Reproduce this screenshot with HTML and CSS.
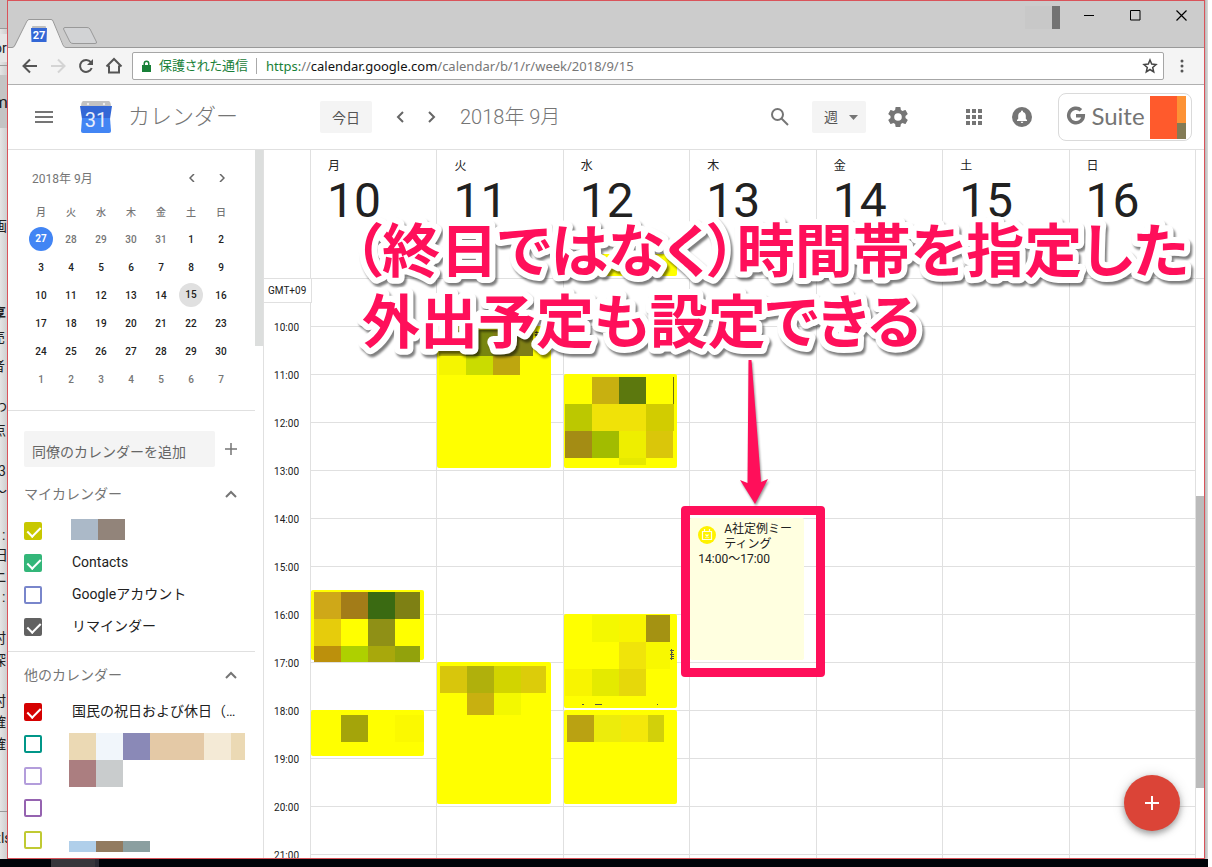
FILE: index.html
```html
<!DOCTYPE html>
<html lang="ja">
<head>
<meta charset="utf-8">
<title>カレンダー - 2018年 9月</title>
<link rel="stylesheet" href="styles.css">
</head>
<body>
<div class="desktop">
  <svg class="behind-left" aria-hidden="true">
    <rect class="behind-tabs" width="7" height="28"/>
    <rect class="behind-rule" y="28" width="7" height="1"/>
    <rect class="behind-field" y="34" width="7" height="28"/>
    <rect class="behind-rule" y="65" width="7" height="1"/>
    <rect class="behind-tabs" y="75" width="7" height="53"/>
    <text x="-6" y="53">or</text>
    <text class="big" x="-7" y="108">m</text>
    <text x="-7" y="231">画</text>
    <text class="strong" x="-8" y="318">享</text>
    <text x="-9" y="342">売</text>
    <text x="-9" y="371">者</text>
    <text x="-7" y="411">わ</text>
    <text x="-8" y="435">点</text>
    <text x="-2" y="476">3</text>
    <text x="-7" y="496">～</text>
    <text x="2" y="540">:</text>
    <text x="-6" y="560">日</text>
    <text x="-7" y="582">ニ</text>
    <text x="2" y="602">:</text>
    <text x="-8" y="643">村</text>
    <text x="-8" y="665">深</text>
    <text x="-8" y="706">村</text>
    <text x="-8" y="727">確</text>
    <text x="-8" y="749">確</text>
    <rect class="behind-rule" y="811" width="7" height="1"/>
    <text x="-6" y="843">xls</text>
  </svg>

  <div class="window">
    <div class="tabstrip">
      <svg class="tabs" width="100" height="47" viewBox="0 0 100 47" role="img" aria-label="カレンダー タブ">
        <path d="M0 46.500H5L7 45 19 19.500Q20 18.500 21 18.500H43Q44 18.500 45 20L56 45 58 46.500V47H0Z" fill="#f4f4f4"/>
        <path d="M0 46.500H4Q6 46.500 7 44L19 20Q20 18.500 21 18.500H43Q44.500 18.500 45 20L55 44Q56 46.500 58 46.500H100" fill="none" stroke="#999"/>
        <path d="M57 26.500H79Q81 26.500 82 28L88.500 41Q89 42.500 87 42.500H65Q63 42.500 62 41L55.500 28Q55.500 26.500 57 26.500Z" fill="#d2d3d5" stroke="#999"/>
        <rect x="24" y="25" width="14" height="4" rx="1" fill="#bdbdbd"/>
        <path d="M23 27H39L38.500 41H23.500Z" fill="#3367d6"/>
        <text x="31" y="38" class="tab-day">27</text>
      </svg>
      <div class="caption">
        <span class="user-light"></span><span class="user-dark"></span>
        <button aria-label="最小化"><svg width="11" height="11"><path d="M0 5.500H10" stroke="#000"/></svg></button>
        <button aria-label="最大化"><svg width="11" height="11"><path d="M.5.5H10V10H.5Z" fill="none" stroke="#000"/></svg></button>
        <button aria-label="閉じる"><svg width="11" height="11"><path d="M.5.5 10.500 10.500M10.500.5.5 10.500" stroke="#000" stroke-width="1.200"/></svg></button>
      </div>
    </div>

    <div class="toolbar">
      <button aria-label="戻る"><svg width="16" height="16" fill="none" stroke="#555" stroke-width="2"><path d="M15 8H2M8 1.500 1.500 8 8 14.500"/></svg></button>
      <button aria-label="進む"><svg width="16" height="16" fill="none" stroke="#d4d4d4" stroke-width="2"><path d="M1 8H14M8 1.500 14.500 8 8 14.500"/></svg></button>
      <button aria-label="再読み込み"><svg width="16" height="16"><path d="M12.800 4.200A6 6 0 1 0 13.700 10" fill="none" stroke="#555" stroke-width="2"/><path d="M15 1V7H9Z" fill="#555"/></svg></button>
      <button aria-label="ホーム"><svg width="18" height="18" fill="none" stroke="#555" stroke-width="2"><path d="M1.500 9.500 9 2 16.500 9.500M4 8.500V15.500H14V8.500"/></svg></button>
      <div class="omnibox">
        <svg width="9" height="12"><path d="M0 5H1.500V3.500A3 3 0 0 1 7.500 3.500V5H9V12H0ZM3 5H6V3.500A1.500 1.500 0 0 0 3 3.500Z" fill="#188038"/></svg>
        <span class="secure">保護された通信</span>
        <span class="url"><span class="scheme">https:</span>//<span class="host">calendar.google.com</span>/calendar/b/1/r/week/2018/9/15</span>
        <button class="star" aria-label="ブックマーク"><svg width="16" height="16"><path d="M8 2 9.700 6.100 14 6.500 10.700 9.400 11.700 13.800 8 11.500 4.300 13.800 5.300 9.400 2 6.500 6.300 6.100Z" fill="none" stroke="#444" stroke-width="1.500"/></svg></button>
      </div>
      <button class="more" aria-label="メニュー"><svg width="4" height="14" fill="#555"><circle cx="2" cy="2" r="1.500"/><circle cx="2" cy="7" r="1.500"/><circle cx="2" cy="12" r="1.500"/></svg></button>
    </div>

    <header class="appbar">
      <button class="hamburger" aria-label="メインメニュー"><svg width="18" height="12" fill="#757575"><path d="M0 0H18V2H0ZM0 5H18V7H0ZM0 10H18V12H0Z"/></svg></button>
      <svg class="logo" width="32" height="32" role="img" aria-label="カレンダー">
        <path d="M3 0H29Q31 1 31 6H1Q1 1 3 0Z" fill="#c2c2c2"/>
        <circle cx="8" cy="3" r="1.200" fill="#eee"/><circle cx="24" cy="3" r="1.200" fill="#eee"/>
        <path d="M0 5H32L30 18H2Z" fill="#3367d6"/>
        <path d="M2 17H30L31 30Q31 32 29 32H3Q1 32 1 30Z" fill="#4285f4"/>
        <text x="16" y="26" class="logo-day">31</text>
      </svg>
      <h1>カレンダー</h1>
      <button class="today">今日</button>
      <button class="step" aria-label="前の週"><svg width="8" height="12"><path d="M7 1 2 6 7 11" fill="none" stroke="#666" stroke-width="2"/></svg></button>
      <button class="step" aria-label="次の週"><svg width="8" height="12"><path d="M1 1 6 6 1 11" fill="none" stroke="#666" stroke-width="2"/></svg></button>
      <h2>2018年 9月</h2>
      <button class="search" aria-label="検索"><svg width="18" height="18" fill="none" stroke="#757575" stroke-width="2"><circle cx="6.500" cy="6.500" r="5.500"/><path d="M10.500 10.500 17 17"/></svg></button>
      <div class="view">
        <select aria-label="表示形式"><option>週</option><option>日</option><option>月</option></select>
        <svg width="10" height="5"><path d="M0 0H9L4.500 5Z" fill="#757575"/></svg>
      </div>
      <button class="gear" aria-label="設定"><svg width="24" height="24" viewBox="0 0 24 24" fill="#757575"><path d="M19.430 12.980c.04-.32.070-.64.070-.98s-.03-.66-.07-.98l2.110-1.650c.19-.15.240-.42.120-.64l-2-3.460c-.12-.22-.39-.3-.61-.22l-2.490 1c-.52-.4-1.080-.73-1.690-.98l-.38-2.650C14.460 2.180 14.250 2 14 2h-4c-.25 0-.46.180-.49.420l-.38 2.650c-.61.250-1.170.590-1.690.980l-2.490-1c-.23-.09-.49 0-.61.220l-2 3.460c-.13.220-.07.490.120.640l2.110 1.650c-.04.320-.07.650-.07.980s.03.660.070.980l-2.110 1.650c-.19.150-.24.420-.12.640l2 3.460c.12.220.390.300.610.220l2.490-1c.52.400 1.080.730 1.690.980l.38 2.650c.03.240.240.420.490.420h4c.25 0 .46-.18.490-.42l.38-2.650c.61-.25 1.170-.59 1.690-.98l2.490 1c.23.090.490 0 .61-.22l2-3.460c.12-.22.070-.49-.12-.64l-2.110-1.650zM12 15.800A3.800 3.800 0 1 1 12 8.200a3.800 3.800 0 0 1 0 7.600z"/></svg></button>
      <button class="apps" aria-label="アプリ"><svg width="16" height="16" fill="#757575"><path d="M0 0H4V4H0ZM6 0H10V4H6ZM12 0H16V4H12ZM0 6H4V10H0ZM6 6H10V10H6ZM12 6H16V10H12ZM0 12H4V16H0ZM6 12H10V16H6ZM12 12H16V16H12Z"/></svg></button>
      <button class="bell" aria-label="通知"><svg width="20" height="20"><circle cx="10" cy="10" r="10" fill="#757575"/><path d="M5 14V13L6.200 11.800V8.700C6.200 6.700 7.300 5.300 9 4.900V4.400A1 1 0 0 1 11 4.400V4.900C12.700 5.300 13.800 6.700 13.800 8.700V11.800L15 13V14ZM8.700 14.800H11.300A1.300 1.300 0 0 1 8.700 14.800Z" fill="#fff"/></svg></button>
      <a class="gsuite" href="#"><svg class="g" width="20" height="20"><path d="M15 4.200A7.300 7.300 0 1 0 17.300 9.700H10" fill="none" stroke="#757575" stroke-width="3.500"/></svg><span>Suite</span>
        <svg width="36" height="43" aria-label="アカウント"><rect width="27" height="43" fill="#ff5a2c"/><rect x="27" width="9" height="27" fill="#fd9235"/><rect x="27" y="27" width="9" height="16" fill="#837b55"/></svg></a>
    </header>

    <div class="content">
      <aside class="sidebar">
        <div class="panel">
          <section class="mini">
            <div class="mini-head"><span>2018年 9月</span>
              <button aria-label="前の月"><svg width="6" height="8"><path d="M5 0 1 4 5 8" fill="none" stroke="#666" stroke-width="1.500"/></svg></button>
              <button aria-label="次の月"><svg width="6" height="8"><path d="M1 0 5 4 1 8" fill="none" stroke="#666" stroke-width="1.500"/></svg></button>
            </div>
            <table>
              <thead><tr><th>月</th><th>火</th><th>水</th><th>木</th><th>金</th><th>土</th><th>日</th></tr></thead>
              <tbody>
                <tr><td><span class="now">27</span></td><td class="out">28</td><td class="out">29</td><td class="out">30</td><td class="out">31</td><td>1</td><td>2</td></tr>
                <tr><td>3</td><td>4</td><td>5</td><td>6</td><td>7</td><td>8</td><td>9</td></tr>
                <tr><td>10</td><td>11</td><td>12</td><td>13</td><td>14</td><td><span class="picked">15</span></td><td>16</td></tr>
                <tr><td>17</td><td>18</td><td>19</td><td>20</td><td>21</td><td>22</td><td>23</td></tr>
                <tr><td>24</td><td>25</td><td>26</td><td>27</td><td>28</td><td>29</td><td>30</td></tr>
                <tr><td class="out">1</td><td class="out">2</td><td class="out">3</td><td class="out">4</td><td class="out">5</td><td class="out">6</td><td class="out">7</td></tr>
              </tbody>
            </table>
          </section>

          <section class="mine">
            <div class="add">
              <input type="text" placeholder="同僚のカレンダーを追加" aria-label="同僚のカレンダーを追加">
              <button aria-label="他のカレンダーを追加"><svg width="12" height="12"><path d="M6 0V12M0 6H12" stroke="#757575" stroke-width="1.500"/></svg></button>
            </div>
            <div class="group"><h3>マイカレンダー</h3><button aria-label="折りたたむ"><svg width="12" height="8"><path d="M1 7 6 2 11 7" fill="none" stroke="#757575" stroke-width="2"/></svg></button></div>
            <label class="cal lime"><input type="checkbox" checked aria-label="自分のカレンダー"><svg class="owner" width="54" height="21"><rect width="27" height="21" fill="#abb9c8"/><rect x="27" width="27" height="21" fill="#92847a"/></svg></label>
            <label class="cal green"><input type="checkbox" checked><span>Contacts</span></label>
            <label class="cal indigo"><input type="checkbox"><span>Googleアカウント</span></label>
            <label class="cal gray"><input type="checkbox" checked><span>リマインダー</span></label>
          </section>

          <section class="others">
            <div class="group"><h3>他のカレンダー</h3><button aria-label="折りたたむ"><svg width="12" height="8"><path d="M1 7 6 2 11 7" fill="none" stroke="#757575" stroke-width="2"/></svg></button></div>
            <label class="cal red"><input type="checkbox" checked><span>国民の祝日および休日（日本）</span></label>
            <label class="cal teal"><input type="checkbox" aria-label="カレンダー 2">
              <svg class="masked" width="176" height="54"><rect width="27" height="27" fill="#ebd9b4"/><rect x="27" width="27" height="27" fill="#f1f6fb"/><rect x="54" width="27" height="27" fill="#8a89b7"/><rect x="81" width="54" height="27" fill="#e4c9a6"/><rect x="135" width="27" height="27" fill="#f4ead6"/><rect x="162" width="14" height="27" fill="#ebd9b4"/><rect y="27" width="27" height="27" fill="#ab7e80"/><rect x="27" y="27" width="27" height="27" fill="#c9cccd"/></svg></label>
            <label class="cal lavender"><input type="checkbox" aria-label="カレンダー 3"></label>
            <label class="cal purple"><input type="checkbox" aria-label="カレンダー 4"></label>
            <label class="cal olive"><input type="checkbox" aria-label="カレンダー 5">
              <svg class="masked low" width="81" height="11"><rect width="27" height="11" fill="#b0cfea"/><rect x="27" width="27" height="11" fill="#927b60"/><rect x="54" width="27" height="11" fill="#8b9fa0"/></svg></label>
          </section>
        </div>
        <div class="side-scroll"></div>
      </aside>

      <main class="week">
        <div class="week-head">
          <div class="gutter"></div>
          <div class="days">
            <div class="day"><span>月</span><b>10</b></div>
            <div class="day"><span>火</span><b>11</b></div>
            <div class="day"><span>水</span><b>12</b><i class="allday"></i></div>
            <div class="day"><span>木</span><b>13</b></div>
            <div class="day"><span>金</span><b>14</b></div>
            <div class="day"><span>土</span><b>15</b></div>
            <div class="day"><span>日</span><b>16</b></div>
          </div>
          <div class="lane"></div>
        </div>
        <div class="week-body">
          <div class="gutter">
            <div class="zone">GMT+09</div>
            <div class="hour">10:00</div><div class="hour">11:00</div><div class="hour">12:00</div><div class="hour">13:00</div><div class="hour">14:00</div><div class="hour">15:00</div><div class="hour">16:00</div><div class="hour">17:00</div><div class="hour">18:00</div><div class="hour">19:00</div><div class="hour">20:00</div><div class="hour">21:00</div>
          </div>
          <div class="days">
            <div class="slots">
              <div class="event mon-a"><svg><rect x="3" y="2" width="27" height="27" fill="#cfa818"/><rect x="30" y="2" width="27" height="27" fill="#a37c18"/><rect x="57" y="2" width="27" height="27" fill="#3a6a12"/><rect x="84" y="2" width="25" height="27" fill="#7e8014"/><rect x="3" y="29" width="27" height="27" fill="#e6cc0c"/><rect x="57" y="29" width="27" height="27" fill="#8f9016"/><rect x="3" y="56" width="27" height="16" fill="#bc900c"/><rect x="30" y="56" width="27" height="16" fill="#aed000"/><rect x="57" y="56" width="27" height="16" fill="#a8a80c"/><rect x="84" y="56" width="25" height="16" fill="#92a20c"/></svg></div>
              <div class="event mon-b"><svg><rect x="30" y="5" width="27" height="27" fill="#a4a40a"/><rect x="84" y="5" width="29" height="27" fill="#fbf900"/></svg></div>
            </div>
            <div class="slots">
              <div class="event tue-a"><svg><rect x="2" y="4" width="27" height="26" fill="#b4b008"/><rect x="29" y="4" width="27" height="26" fill="#78860f"/><rect x="56" y="4" width="40" height="26" fill="#7f7f17"/><rect x="2" y="30" width="27" height="19" fill="#f5f500"/><rect x="29" y="30" width="27" height="19" fill="#cadc00"/><rect x="56" y="30" width="27" height="19" fill="#bea60f"/></svg><span>売</span></div>
              <div class="event tue-b"><svg><rect x="3" y="4" width="27" height="27" fill="#d8c60c"/><rect x="30" y="4" width="27" height="27" fill="#b0b00c"/><rect x="57" y="4" width="27" height="27" fill="#d2d400"/><rect x="84" y="4" width="25" height="27" fill="#dccc0a"/><rect x="30" y="31" width="27" height="22" fill="#c8b010"/><rect x="57" y="31" width="27" height="22" fill="#f3f800"/></svg></div>
            </div>
            <div class="slots">
              <div class="event wed-a"><svg><rect x="28" y="3" width="27" height="27" fill="#c8b010"/><rect x="55" y="3" width="27" height="27" fill="#5c780e"/><rect x="109" y="3" width="1" height="27" fill="#706d10"/><rect x="1" y="30" width="27" height="27" fill="#bcc800"/><rect x="28" y="30" width="54" height="27" fill="#f0e208"/><rect x="82" y="30" width="28" height="27" fill="#d2cc00"/><rect x="1" y="57" width="27" height="27" fill="#a48c14"/><rect x="28" y="57" width="27" height="27" fill="#a2bc00"/><rect x="55" y="57" width="27" height="27" fill="#eeee00"/><rect x="82" y="57" width="27" height="27" fill="#dac60a"/><rect x="55" y="84" width="27" height="7" fill="#e6e900"/></svg></div>
              <div class="event wed-b"><svg><rect x="28" y="1" width="27" height="27" fill="#f4f800"/><rect x="55" y="1" width="27" height="27" fill="#f9f500"/><rect x="82" y="1" width="24" height="27" fill="#a49212"/><rect x="55" y="28" width="27" height="27" fill="#f0e40a"/><rect x="82" y="28" width="24" height="27" fill="#f8f800"/><rect x="1" y="55" width="27" height="27" fill="#f8f400"/><rect x="28" y="55" width="27" height="27" fill="#e4ea00"/><rect x="55" y="55" width="27" height="27" fill="#e6d80a"/><path d="M106 36.500H110M107 38.500H109M106 40.500H110M107 42.500H110M106 44.500H110M107.500 35V46M18 90.500H20M31 90.500H38M93 90.500H94" fill="none" stroke="#554"/></svg></div>
              <div class="event wed-c"><svg><rect x="3" y="5" width="27" height="27" fill="#baa212"/><rect x="30" y="5" width="27" height="27" fill="#ecec0c"/><rect x="57" y="5" width="27" height="27" fill="#f4e80a"/><rect x="84" y="5" width="16" height="27" fill="#d2d00a"/></svg></div>
            </div>
            <div class="slots">
              <div class="event meeting">
                <div class="meeting-title">
                  <svg width="18" height="18"><circle cx="9" cy="9" r="9" fill="#fff200"/><path d="M4.500 5.500H13.500V13.500H4.500ZM6.500 3V5.500M11.500 3V5.500M7.500 8.500 10.500 11.500M10.500 8.500 7.500 11.500" fill="none" stroke="#ffffe6" stroke-width="1.200"/></svg>
                  <strong>A社定例ミーティング</strong>
                </div>
                <time>14:00～17:00</time>
                <div class="frame"></div>
              </div>
            </div>
            <div class="slots"></div><div class="slots"></div><div class="slots"></div>
          </div>
          <div class="lane"><div class="thumb"></div></div>
        </div>

        <svg class="note" width="940" height="360">
          <text x="89" y="122">（終日ではなく）時間帯を指定した</text>
          <text x="98" y="193">外出予定も設定できる</text>
          <path d="M484.500 210H487.500L497 332 504 329 491 354 476 330 483.500 333Z"/>
        </svg>
        <button class="fab" aria-label="予定を作成"><svg width="14" height="14"><path d="M7 0V14M0 7H14" stroke="#fff" stroke-width="2"/></svg></button>
      </main>
    </div>
  </div>
  <div class="behind-right"></div>
</div>
<div class="taskbar"><span></span></div>
</body>
</html>
```
FILE: styles.css
```css
* { box-sizing: border-box; }
body {
  margin: 0;
  height: 100vh;
  display: flex;
  flex-direction: column;
  overflow: hidden;
  background: #fff;
  color: #212121;
  font-family: Roboto, "Noto Sans CJK JP", sans-serif;
  font-size: 14px;
}
button {
  padding: 0;
  border: 0;
  background: none;
  font: inherit;
  color: inherit;
  display: flex;
  align-items: center;
  justify-content: center;
}
h1, h2, h3 { margin: 0; font-weight: 300; }
svg { display: block; flex: none; }

/* Desktop and the windows behind */
.desktop { flex: 1; min-height: 0; display: flex; }
.behind-left { width: 7px; height: 100%; overflow: hidden; background: linear-gradient(90deg, #e4e4e4, #cfcfcf); }
.behind-left text { font-size: 14px; fill: #222; }
.behind-left .big { font-size: 17px; }
.behind-left .strong { font-weight: 700; }
.behind-tabs { fill: #c4c4c4; }
.behind-field { fill: #e6e6e6; }
.behind-rule { fill: #999; }
.behind-right { width: 7px; background: linear-gradient(90deg, #b8b8b8, #dcdcdc 3px, #fff 3px); }
.taskbar { height: 8px; margin-right: 4px; padding-left: 51px; background: #000308; }
.taskbar span { display: block; width: 48px; height: 8px; background: #37363b; border-right: 4px solid #292a33; }

.window {
  flex: 1;
  min-width: 0;
  display: flex;
  flex-direction: column;
  border: 1px solid #d9535a;
  background: #fff;
}

/* Browser chrome */
.tabstrip {
  height: 47px;
  flex: none;
  display: flex;
  justify-content: space-between;
  background: #ccc linear-gradient(#999, #999) bottom / 100% 1px no-repeat;
}
.tab-day { font-size: 11px; font-weight: 700; fill: #fff; text-anchor: middle; }
.caption { display: flex; align-items: flex-start; padding: 5px 17px 0 0; }
.user-light { width: 27px; height: 23px; background: #c8c8c8; }
.user-dark { width: 8px; height: 23px; margin-right: 24px; background: #737373; }
.caption button { width: 11px; height: 18px; margin-left: 35px; }
.user-dark + button { margin-left: 0; }
.toolbar {
  height: 37px;
  flex: none;
  display: flex;
  align-items: center;
  gap: 8px;
  padding: 0 20px 0 12px;
  background: #f4f4f4;
  border-bottom: 1px solid #b0b0b0;
}
.toolbar > button { width: 20px; height: 20px; }
.toolbar > .more { width: 4px; margin-left: 8px; }
.omnibox {
  flex: 1;
  height: 28px;
  padding: 0 5px 0 9px;
  display: flex;
  align-items: center;
  border: 1px solid #a6a6a6;
  border-radius: 2px;
  background: #fff;
}
.secure {
  margin-left: 8px;
  padding-right: 8px;
  border-right: 1px solid #aaa;
  color: #188038;
  font-size: 13px;
  line-height: 16px;
  font-feature-settings: "palt";
}
.url { margin-left: 9px; color: #777; font-family: "Noto Sans", sans-serif; font-size: 13px; }
.scheme { color: #188038; }
.host { color: #111; }
.star { margin-left: auto; }

/* Application header */
.appbar {
  height: 65px;
  flex: none;
  display: flex;
  align-items: center;
  padding: 0 12px 0 27px;
  border-bottom: 1px solid #e0e0e0;
  color: #757575;
}
.hamburger { width: 18px; height: 32px; }
.logo { margin-left: 27px; }
.logo-day { font-size: 20px; fill: #e8eefb; text-anchor: middle; }
h1 { width: 192px; margin-left: 16px; font-size: 22px; line-height: 32px; }
.today { width: 52px; height: 32px; margin-right: 12px; border-radius: 2px; background: #f4f4f4; color: #555; }
.step { width: 32px; height: 32px; }
h2 { margin-left: 12px; font-size: 20px; line-height: 32px; }
.search { margin-left: auto; }
.view { position: relative; width: 54px; margin: 0 20px 0 23px; }
.view select {
  appearance: none;
  width: 100%;
  height: 32px;
  padding: 0 12px;
  border: 0;
  border-radius: 2px;
  background: #f4f4f4;
  color: #555;
  font: inherit;
}
.view svg { position: absolute; right: 7px; top: 14px; pointer-events: none; }
.apps { margin-left: 56px; }
.bell { margin-left: 30px; }
.gsuite {
  width: 134px;
  height: 48px;
  margin-left: 26px;
  padding: 0 5px 0 7px;
  display: flex;
  align-items: center;
  justify-content: space-between;
  border: 1px solid #dadada;
  border-radius: 8px;
  color: #757575;
  font-family: Lato, sans-serif;
  font-size: 24px;
  line-height: 32px;
  text-decoration: none;
}
.gsuite span { padding-bottom: 2px; }
.gsuite .g { margin-bottom: 2px; }

/* Sidebar */
.content { flex: 1; min-height: 0; display: flex; overflow: hidden; }
.sidebar { width: 256px; flex: none; display: flex; border-right: 1px solid #e0e0e0; overflow: hidden; }
.panel { width: 247px; }
.side-scroll { flex: 1; height: 196px; background: #dcdedd; }
.mini { height: 261px; padding: 13px 18px 0; border-bottom: 1px solid #e0e0e0; }
.mini-head { height: 29px; display: flex; align-items: center; color: #757575; font-size: 12px; }
.mini-head span { flex: 1; padding-left: 6px; }
.mini-head button { width: 30px; height: 28px; }
.mini table { width: 210px; margin-top: 5px; border-collapse: collapse; table-layout: fixed; text-align: center; font-size: 10px; }
.mini th { height: 28px; padding: 0; color: #757575; font-weight: 500; }
.mini td { height: 28px; padding: 0; font-weight: 500; }
.mini .out { color: #757575; }
.mini td span { display: block; width: 24px; line-height: 24px; margin: 0 auto; border-radius: 50%; }
.now { background: #4285f4; color: #fff; font-weight: 700; }
.picked { background: #e0e0e0; }

.mine { height: 241px; padding: 20px 15px 0 16px; border-bottom: 1px solid #e0e0e0; }
.add { display: flex; align-items: center; }
.add input {
  flex: 1;
  min-width: 0;
  height: 36px;
  padding: 6px 8px 0;
  border: 0;
  border-radius: 2px;
  background: #f4f4f4;
  font: inherit;
}
.add input::placeholder { color: #666; opacity: 1; }
.add button { width: 32px; margin-right: -7px; }
.group { height: 32px; display: flex; align-items: center; justify-content: space-between; padding-right: 3px; color: #757575; }
.group h3 { font-size: 14px; font-weight: 400; line-height: 32px; }
.mine .group { margin: 11px 0 5px; }
.others { padding: 7px 15px 0 16px; }
.others .group { margin-bottom: 5px; }
.cal { position: relative; height: 32px; display: flex; align-items: center; color: #212121; }
.cal input {
  appearance: none;
  position: relative;
  flex: none;
  width: 18px;
  height: 18px;
  margin: 0 29px 0 0;
  border: 2px solid var(--tone);
  border-radius: 2px;
  background: #fff;
}
.cal input:checked { background: var(--tone); }
.cal input:checked::after {
  content: "";
  position: absolute;
  left: 4px;
  top: 0;
  width: 6px;
  height: 11px;
  border: solid #fff;
  border-width: 0 2px 2px 0;
  rotate: 45deg;
}
.cal span { width: 166px; padding: 0 0 2px 1px; overflow: hidden; white-space: nowrap; text-overflow: ellipsis; line-height: 20px; }
.owner { margin-bottom: 3px; }
.masked { position: absolute; left: 45px; top: 5px; }
.masked.low { top: 17px; }
.lime { --tone: #c8c800; }
.green { --tone: #33b679; }
.indigo { --tone: #7986cb; }
.gray { --tone: #616161; }
.red { --tone: #d50000; }
.teal { --tone: #009688; }
.lavender { --tone: #b39ddb; }
.purple { --tone: #9563b0; }
.olive { --tone: #c0ca33; }

/* Week grid */
.week { position: relative; flex: 1; min-width: 0; display: flex; flex-direction: column; overflow: hidden; }
.week-head { height: 129px; flex: none; display: flex; border-bottom: 1px solid #e0e0e0; }
.week-body { flex: 1; min-height: 0; display: flex; overflow: hidden; }
.gutter { width: 46px; flex: none; }
.days { flex: 1; min-width: 0; display: grid; grid-template-columns: repeat(7, 1fr); border-right: 1px solid #e0e0e0; }
.lane { width: 8px; flex: none; }
.thumb { height: 292px; margin-top: 217px; background: #bbb; }
.day { position: relative; min-width: 0; padding: 8px 0 0 16px; border-left: 1px solid #e0e0e0; }
.day span { display: block; font-size: 12px; line-height: 16px; padding-left: 1px; }
.day b { display: block; font-size: 48px; font-weight: 400; line-height: 54px; }
.allday { position: absolute; left: 0; right: 12px; bottom: 2px; height: 22px; border-radius: 2px; background: #ff0; }
.zone { position: relative; z-index: 1; height: 24px; margin-right: -2px; padding-left: 4px; border: solid #e0e0e0; border-width: 0 1px 1px 0; background: #fff; font-size: 10px; line-height: 24px; }
.hour { height: 48px; padding-right: 11px; text-align: right; font-size: 10px; line-height: 50px; }
.slots {
  position: relative;
  min-width: 0;
  border-left: 1px solid #e0e0e0;
  background: repeating-linear-gradient(#fff 0 47px, #e0e0e0 47px 48px);
}
.event { position: absolute; z-index: 1; left: 0; right: 12px; border-radius: 2px; background: #ff0; }
.event > svg { width: 100%; height: 100%; overflow: visible; }
.mon-a { top: 311px; height: 70px; }
.mon-b { top: 431px; height: 46px; }
.tue-a { top: 47px; height: 142px; }
.tue-a span { position: absolute; right: 9px; top: 5px; font-size: 10px; line-height: 12px; clip-path: inset(0 0 0 3px); }
.tue-b { top: 383px; height: 142px; }
.wed-a { top: 95px; height: 94px; }
.wed-b { top: 335px; height: 94px; }
.wed-c { top: 431px; height: 94px; }
.meeting { top: 239px; height: 142px; padding: 4px 6px 0 8px; background: #ffffe0; font-size: 12px; line-height: 15px; }
.meeting-title { display: flex; align-items: flex-start; gap: 8px; }
.meeting-title svg { margin-top: 4px; }
.meeting-title strong { font-weight: 400; }
.meeting time { display: block; }
.frame { position: absolute; inset: -12px -21px -17px -9px; border: 9px solid #ff0f5a; border-radius: 4px; }

.note { position: absolute; z-index: 2; left: 0; top: 0; overflow: visible; pointer-events: none; }
.note text {
  font-family: "Noto Sans CJK JP", sans-serif;
  font-size: 58px;
  font-weight: 700;
  font-feature-settings: "palt";
  fill: #ff0f5a;
  stroke: #fff;
  stroke-width: 12px;
  stroke-linejoin: round;
  paint-order: stroke;
  filter: drop-shadow(2px 3px 1px rgba(0, 0, 0, .5));
}
.note path { fill: #ff0f5a; filter: drop-shadow(1px 2px 1px rgba(0, 0, 0, .4)); }
.fab {
  position: absolute;
  z-index: 3;
  right: 24px;
  bottom: 27px;
  width: 56px;
  height: 56px;
  border-radius: 50%;
  background: #db4437;
  box-shadow: 0 3px 6px rgba(0, 0, 0, .35), 0 0 14px rgba(0, 0, 0, .12);
}
```
